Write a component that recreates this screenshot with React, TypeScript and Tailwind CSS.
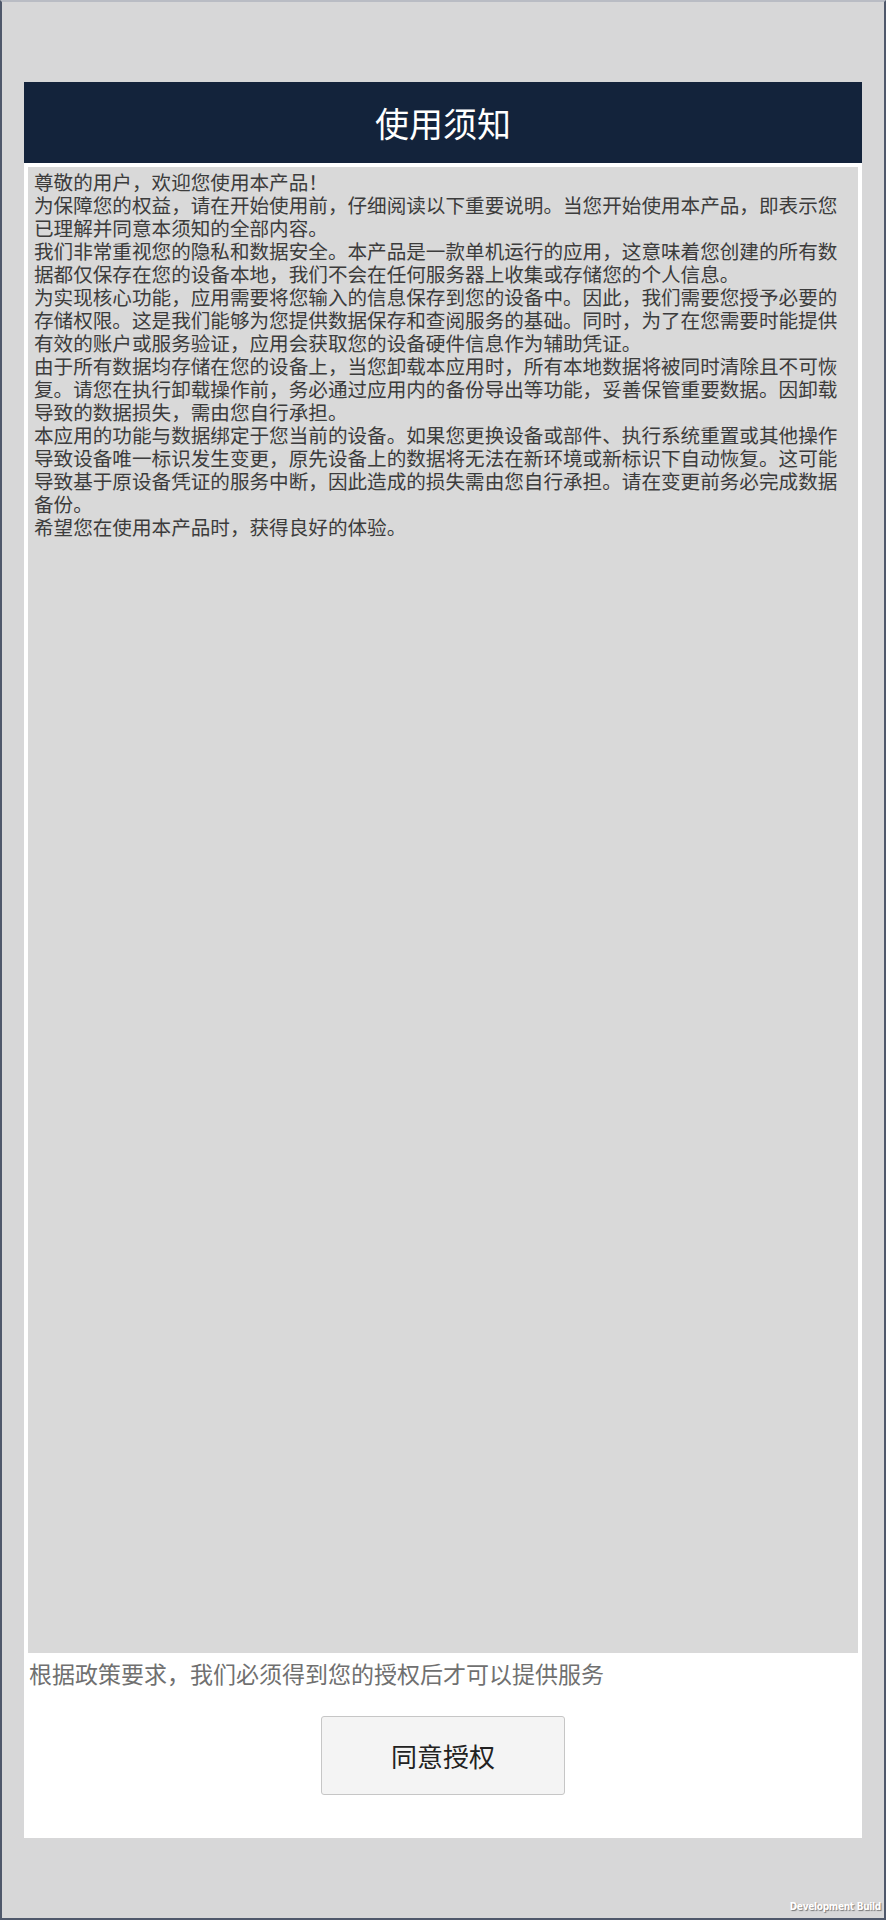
import React from "react";

const paragraphs = [
  "尊敬的用户，欢迎您使用本产品！",
  "为保障您的权益，请在开始使用前，仔细阅读以下重要说明。当您开始使用本产品，即表示您已理解并同意本须知的全部内容。",
  "我们非常重视您的隐私和数据安全。本产品是一款单机运行的应用，这意味着您创建的所有数据都仅保存在您的设备本地，我们不会在任何服务器上收集或存储您的个人信息。",
  "为实现核心功能，应用需要将您输入的信息保存到您的设备中。因此，我们需要您授予必要的存储权限。这是我们能够为您提供数据保存和查阅服务的基础。同时，为了在您需要时能提供有效的账户或服务验证，应用会获取您的设备硬件信息作为辅助凭证。",
  "由于所有数据均存储在您的设备上，当您卸载本应用时，所有本地数据将被同时清除且不可恢复。请您在执行卸载操作前，务必通过应用内的备份导出等功能，妥善保管重要数据。因卸载导致的数据损失，需由您自行承担。",
  "本应用的功能与数据绑定于您当前的设备。如果您更换设备或部件、执行系统重置或其他操作导致设备唯一标识发生变更，原先设备上的数据将无法在新环境或新标识下自动恢复。这可能导致基于原设备凭证的服务中断，因此造成的损失需由您自行承担。请在变更前务必完成数据备份。",
  "希望您在使用本产品时，获得良好的体验。",
];

export default function App() {
  return (
    <div
      className="relative w-[886px] h-[1920px] bg-[#d7d7d8] border-2 border-[#4f586b] border-t-[#b9bcc4] pt-[80px] px-[22px]"
      style={{ fontFamily: '"Noto Sans CJK SC", "Noto Sans", sans-serif' }}
    >
      <div className="h-[1756px] bg-white flex flex-col">
        <div className="h-[81px] bg-[#13233b] flex items-center justify-center">
          <span className="text-white text-[34px] leading-none">使用须知</span>
        </div>
        <div className="px-[4px] pt-[4px]">
          <div className="h-[1486px] bg-[#d9d9d9] pt-[3px] pl-[6px] pr-[12px] text-[#3c3c3c] text-[19.6px] leading-[23px]">
            {paragraphs.map((p, i) => (
              <p key={i}>{p}</p>
            ))}
          </div>
        </div>
        <div className="pl-[5px] pt-[7px] text-[23px] leading-[26px] text-[#707070]">
          根据政策要求，我们必须得到您的授权后才可以提供服务
        </div>
        <div className="flex justify-center mt-[30px]">
          <button className="w-[244px] h-[79px] bg-[#f4f4f4] border border-[#c6c6c6] rounded-[3px] text-[26px] text-[#222222] flex items-center justify-center">
            同意授权
          </button>
        </div>
      </div>
      <div
        className="absolute right-[3px] bottom-[6px] text-[10px] font-bold text-white leading-none tracking-[-0.3px] [text-shadow:1px_1px_1px_rgba(0,0,0,0.45)]"
        style={{ fontFamily: '"DejaVu Sans Condensed", "DejaVu Sans", sans-serif' }}
      >
        Development Build
      </div>
    </div>
  );
}
